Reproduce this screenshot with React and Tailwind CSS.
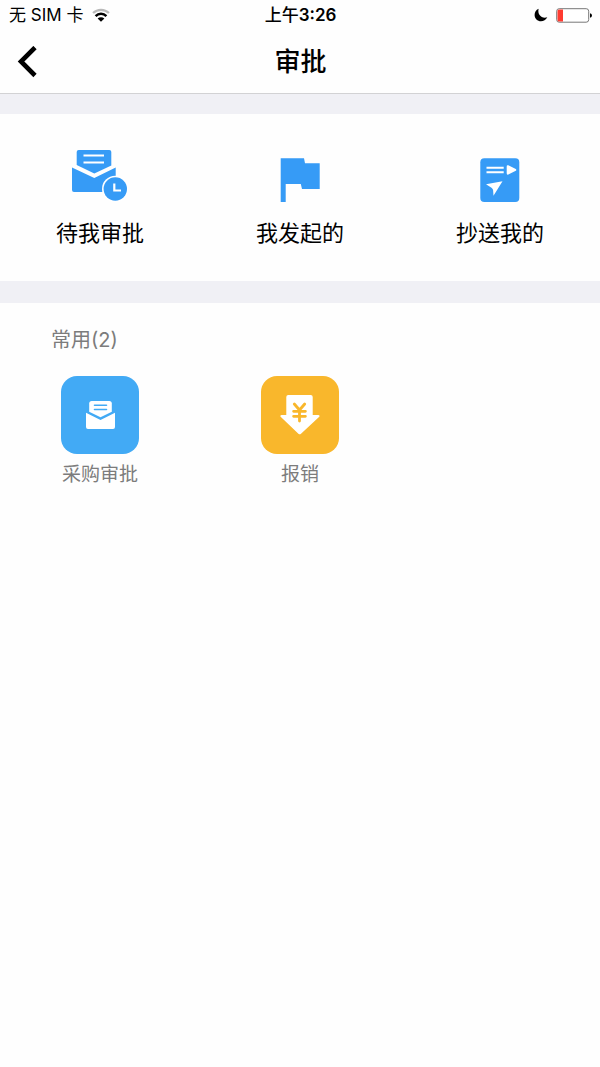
import React from 'react'

function StatusBar() {
  return (
    <div className="grid grid-cols-3 items-center h-[30px] pl-[9px] pr-2 text-[17px] leading-[30px]">
      <div className="flex items-center gap-[9px]">
        <span>无 SIM 卡</span>
        <svg width="18" height="14" viewBox="0 0 17 13" fill="none">
          <path d="M1 4.6C5.2.6 11.8.6 16 4.6" stroke="#b9b9b9" strokeWidth="2.2" />
          <path d="M3.4 7.5c2.9-2.8 7.3-2.8 10.2 0" stroke="#000" strokeWidth="2.4" />
          <path d="M8.5 12.8 5.3 9.9c1.8-1.6 4.6-1.6 6.4 0z" fill="#000" />
        </svg>
      </div>
      <div className="text-center font-medium">
        上午<span className="font-semibold">3:26</span>
      </div>
      <div className="flex items-center justify-end gap-2">
        <svg width="14" height="14" viewBox="0 0 14 14">
          <path d="M4.6.8C3.2 6.4 7.4 11 13.3 9.3 11.8 12 9.6 13.3 7 13.3 3.4 13.3.6 10.5.6 7 .6 4.2 2 1.9 4.6.8z" fill="#000" />
        </svg>
        <svg width="36" height="15" viewBox="0 0 36 15">
          <rect x="0.7" y="0.7" width="32" height="13.5" rx="2.5" fill="#fff" stroke="#777" />
          <path d="M3 1.5h4v12H3q-1.5 0-1.5-1.5V3q0-1.5 1.5-1.5z" fill="#ff3b30" />
          <path d="M34 5.2q2 .6 2 2.3t-2 2.3z" fill="#000" />
        </svg>
      </div>
    </div>
  )
}

function Header() {
  return (
    <header className="grid grid-cols-3 items-center h-16 pl-[17px] pr-4 border-b border-[#d2d2d4]">
      <button className="w-8 h-10 flex items-center" aria-label="返回">
        <svg width="20" height="32" viewBox="0 0 20 32" fill="none">
          <path d="M18 1.5 4 15.5l14 14" stroke="#000" strokeWidth="4.6" />
        </svg>
      </button>
      <h1 className="text-center text-[26px] leading-8 font-medium">审批</h1>
    </header>
  )
}

function PendingIcon() {
  return (
    <svg width="56" height="53" viewBox="0 0 56 53" fill="#369bf6">
      <path d="M4.7 3q0-2 2-2h30.6q2 0 2 2v13.5l-17 8L4.7 16z" />
      <path d="M11.5 6.5H32M11.5 13.5H32" stroke="#fff" strokeWidth="2.2" />
      <path d="M0 18.5 22.3 29l21.4-10.500V43H2q-2 0-2-2z" />
      <circle cx="43.3" cy="40" r="13.3" fill="#fff" />
      <circle cx="43.3" cy="40" r="11.7" />
      <path d="M42.3 34.5v7H49" fill="none" stroke="#fff" strokeWidth="2.2" />
    </svg>
  )
}

function FlagIcon() {
  return (
    <svg width="40" height="44" viewBox="0 0 40 44" fill="#369bf6">
      <path d="M.7.3H24l1 5h14.7V31H22l-1.2-5H5.700v18h-5z" />
    </svg>
  )
}

function CopyIcon() {
  return (
    <svg width="40" height="44" viewBox="0 0 40 44">
      <rect x="0.3" y="0.3" width="39" height="43.7" rx="4" fill="#369bf6" />
      <path d="M6.5 9.7h17.2M6.5 14.2h17.2" stroke="#fff" strokeWidth="2" />
      <path d="M26.7 8.5q0-1.8 1.600-1.200l7.500 3.800q1 .8 0 1.600l-7.500 3.800q-1.600.6-1.600-1.200z" fill="#fff" />
      <path d="M22.5 23.3 6 26.300l5.500 3.500q1.500 1 1.600 2.500l.4 5.500z" fill="#fff" />
    </svg>
  )
}

function MailIcon() {
  return (
    <svg width="29" height="28" viewBox="0 0 29 28" fill="#fff">
      <path d="M3.2 2.5Q3.2 0 5.7 0h17.600q2.500 0 2.500 2.500v8.300L14.500 16.200 3.200 10.800z" />
      <path d="M8.5 4.300h12M8.500 8.500h12" stroke="#42aaf5" strokeWidth="1.6" strokeLinecap="round" />
      <path d="M0 11.8 14.5 19 29 11.8V26q0 2-2 2H2q-2 0-2-2z" />
    </svg>
  )
}

function RefundIcon() {
  return (
    <svg width="40" height="40" viewBox="0 0 40 40" fill="none">
      <path d="M6.3 2q0-2 2-2h22.4q2 0 2 2v18H38q2.500.3 1 2L21 38.700q-1.300 1-2.600 0L.9 22q-1.500-1.700 1-2h4.400z" fill="#fff" />
      <path d="m14.3 9 5.200 6 5.200-6M13.600 16.300h11.800M13.600 21.300h11.800M19.500 15v11" stroke="#f9b72c" strokeWidth="2.8" strokeLinecap="round" />
    </svg>
  )
}

const menus = [
  { name: '待我审批', icon: <PendingIcon /> },
  { name: '我发起的', icon: <FlagIcon /> },
  { name: '抄送我的', icon: <CopyIcon /> },
]

const apps = [
  { name: '采购审批', icon: <MailIcon />, color: 'bg-[#42aaf5]' },
  { name: '报销', icon: <RefundIcon />, color: 'bg-[#f9b72c]' },
]

function App() {
  return (
    <div className="min-h-screen bg-[#fefefe] text-black font-['Inter','Noto_Sans_CJK_SC',sans-serif]">
      <StatusBar />
      <Header />

      <main>
        <nav className="grid grid-cols-3 border-t-[20px] border-b-[22px] border-[#f0f0f5] pt-[35px] pb-8">
          {menus.map((item) => (
            <a href="#" key={item.name} className="flex flex-col items-center gap-4">
              <span className="h-[53px] flex items-end">{item.icon}</span>
              <span className="text-[22px] leading-[31px]">{item.name}</span>
            </a>
          ))}
        </nav>

        <section className="pt-[23px]">
          <h2 className="pl-[51px] text-[20px] leading-7 text-[#7c7c7c]">常用(2)</h2>
          <div className="grid grid-cols-3 mt-[22px]">
            {apps.map((item) => (
              <a href="#" key={item.name} className="flex flex-col items-center gap-[7px]">
                <span className={`size-[78px] rounded-2xl flex items-center justify-center ${item.color}`}>
                  {item.icon}
                </span>
                <span className="text-[19px] leading-7 text-[#7c7c7c]">{item.name}</span>
              </a>
            ))}
          </div>
        </section>
      </main>
    </div>
  )
}

export default App
